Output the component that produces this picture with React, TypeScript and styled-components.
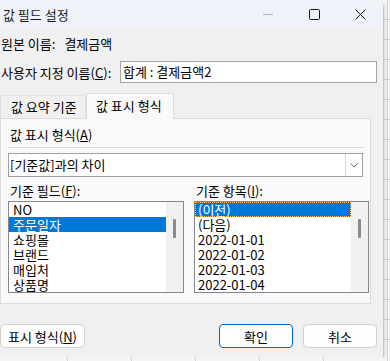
import React from 'react';
import styled, { createGlobalStyle } from 'styled-components';

const GlobalStyle = createGlobalStyle`
  html, body {
    margin: 0;
    padding: 0;
  }
  body {
    background-color: #f4f4f4;
    background-image:
      repeating-linear-gradient(to right, transparent 0 63px, #d2d2d2 63px 64px),
      repeating-linear-gradient(to bottom, transparent 0 19px, #d2d2d2 19px 20px);
    background-position: 4px 0, 0 0;
    font-family: "Noto Sans CJK KR", "Noto Sans", sans-serif;
    font-size: 13px;
    color: #000;
  }
`;

const Dialog = styled.div`
  width: 383px;
  height: 357px;
  box-sizing: border-box;
  background: #f0f0f0;
  border-radius: 0 7px 0 0;
  box-shadow: 1px 1px 0 #c8c8c8, 2px 2px 3px rgba(0, 0, 0, 0.12);
  display: flex;
  flex-direction: column;
  overflow: hidden;
`;

const TitleBar = styled.div`
  height: 28px;
  flex-shrink: 0;
  background: #eff3f9;
  display: flex;
  align-items: center;
  padding-left: 3px;
`;

const Title = styled.span`
  line-height: 15px;
  color: #1a1a1a;
`;

const Controls = styled.div`
  margin-left: auto;
  display: flex;
  height: 100%;
`;

const CaptionButton = styled.div`
  width: 46px;
  height: 100%;
  display: flex;
  align-items: center;
  justify-content: center;
`;

const Body = styled.div`
  flex: 1;
  display: flex;
  flex-direction: column;
  padding: 0 6px 0 1px;
`;

const InfoRow = styled.div`
  margin-top: 8px;
  line-height: 15px;
  display: flex;
  gap: 9px;
`;

const NameRow = styled.div`
  margin-top: 10px;
  display: flex;
  align-items: center;
`;

const NameLabel = styled.span`
  width: 119px;
  flex-shrink: 0;
  line-height: 15px;
  white-space: nowrap;
`;

const NameInput = styled.div`
  flex: 1;
  height: 22px;
  box-sizing: border-box;
  border: 1px solid #a6a6a6;
  background: #fff;
  padding-left: 2px;
  line-height: 20px;
`;

const U = styled.span`
  text-decoration: underline;
  text-underline-offset: 1px;
`;

const TabStrip = styled.div`
  margin: 10px 0 0 -1px;
  height: 25px;
  display: flex;
  align-items: flex-end;
  position: relative;
  z-index: 1;
`;

const Tab = styled.div<{ $active?: boolean }>`
  box-sizing: border-box;
  height: ${({ $active }) => ($active ? '26px' : '23px')};
  width: ${({ $active }) => ($active ? '88px' : '86px')};
  margin-bottom: ${({ $active }) => ($active ? '-1px' : '0')};
  background: ${({ $active }) => ($active ? '#f9f9f9' : '#f0f0f0')};
  border: 1px solid ${({ $active }) => ($active ? '#dcdcdc' : '#e2e2e2')};
  border-bottom: none;
  padding-left: ${({ $active }) => ($active ? '9px' : '10px')};
  line-height: ${({ $active }) => ($active ? '24px' : '21px')};
  white-space: nowrap;
`;

const Panel = styled.div`
  margin: 0 6px 0 -1px;
  height: 186px;
  box-sizing: border-box;
  background: #f9f9f9;
  border: 1px solid #dcdcdc;
  padding: 8px 7px 0;
  display: flex;
  flex-direction: column;
`;

const SectionLabel = styled.div`
  line-height: 15px;
  padding-left: 2px;
`;

const Separator = styled.div`
  margin-top: 5px;
  height: 1px;
  background: #d9d9d9;
`;

const Select = styled.div`
  margin-top: 5px;
  height: 24px;
  box-sizing: border-box;
  border: 1px solid #a0a0a0;
  background: #fff;
  display: flex;
`;

const SelectValue = styled.div`
  flex: 1;
  padding-left: 1px;
  line-height: 22px;
`;

const SelectArrow = styled.div`
  width: 16px;
  border-left: 1px solid #d4d4d4;
  display: flex;
  align-items: center;
  justify-content: center;
`;

const Columns = styled.div`
  margin-top: 6px;
  display: grid;
  grid-template-columns: 176px 175px;
  column-gap: 10px;
`;

const ColumnLabel = styled.div`
  line-height: 15px;
  padding-left: 2px;
  margin-bottom: 3px;
`;

const ListBox = styled.div`
  height: 92px;
  box-sizing: border-box;
  border: 1px solid #828790;
  background: #fff;
  display: flex;
`;

const ListRows = styled.div`
  flex: 1;
  overflow: hidden;
`;

const ListRow = styled.div<{ $selected?: boolean; $focus?: boolean; $indent: number }>`
  height: 15px;
  line-height: 15px;
  box-sizing: border-box;
  padding-left: ${({ $indent }) => $indent}px;
  white-space: nowrap;
  background: ${({ $selected }) => ($selected ? '#0078d7' : 'transparent')};
  color: ${({ $selected }) => ($selected ? '#fff' : '#000')};
  outline: ${({ $focus }) => ($focus ? '1px dotted #f5c26b' : 'none')};
  outline-offset: -1px;
`;

const ScrollTrack = styled.div`
  width: 17px;
  background: #f0f0f0;
  display: flex;
  justify-content: center;
  padding-top: 17px;
  box-sizing: border-box;
`;

const ScrollThumb = styled.div`
  width: 3px;
  height: 19px;
  border-radius: 1px;
  background: #8a8a8a;
`;

const ButtonRow = styled.div`
  margin-top: 20px;
  margin-left: -1px;
  display: flex;
  gap: 10px;
`;

const Button = styled.div<{ $primary?: boolean; $wide?: boolean }>`
  width: ${({ $wide }) => ($wide ? '85px' : '74px')};
  height: 24px;
  box-sizing: border-box;
  border: 1px solid ${({ $primary }) => ($primary ? '#0067c0' : '#d0d0d0')};
  border-radius: 4px;
  background: #fdfdfd;
  display: flex;
  align-items: center;
  justify-content: center;
  line-height: 15px;
  white-space: nowrap;
`;

const Spacer = styled.div`
  flex: 1;
`;

const fields = ['NO', '주문일자', '쇼핑몰', '브랜드', '매입처', '상품명'];
const items = ['(이전)', '(다음)', '2022-01-01', '2022-01-02', '2022-01-03', '2022-01-04'];

export default function App() {
  return (
    <>
      <GlobalStyle />
      <Dialog>
        <TitleBar>
          <Title>값 필드 설정</Title>
          <Controls>
            <CaptionButton>
              <svg width="10" height="10" viewBox="0 0 10 10">
                <path d="M0 5.5h10" stroke="#b5b5b5" strokeWidth="1" />
              </svg>
            </CaptionButton>
            <CaptionButton>
              <svg width="11" height="11" viewBox="0 0 11 11">
                <rect x="0.5" y="0.5" width="10" height="10" rx="1" fill="none" stroke="#1a1a1a" strokeWidth="1" />
              </svg>
            </CaptionButton>
            <CaptionButton>
              <svg width="11" height="11" viewBox="0 0 11 11">
                <path d="M0.5 0.5l10 10M10.5 0.5l-10 10" stroke="#1a1a1a" strokeWidth="1" />
              </svg>
            </CaptionButton>
          </Controls>
        </TitleBar>
        <Body>
          <InfoRow>
            <span>원본 이름:</span>
            <span>결제금액</span>
          </InfoRow>
          <NameRow>
            <NameLabel>
              사용자 지정 이름(<U>C</U>):
            </NameLabel>
            <NameInput>합계 : 결제금액2</NameInput>
          </NameRow>
          <TabStrip>
            <Tab>값 요약 기준</Tab>
            <Tab $active>값 표시 형식</Tab>
          </TabStrip>
          <Panel>
            <SectionLabel>
              값 표시 형식(<U>A</U>)
            </SectionLabel>
            <Separator />
            <Select>
              <SelectValue>[기준값]과의 차이</SelectValue>
              <SelectArrow>
                <svg width="8" height="5" viewBox="0 0 8 5">
                  <path d="M0.5 0.5l3.5 3.5 3.5-3.5" fill="none" stroke="#6b6b6b" strokeWidth="1" />
                </svg>
              </SelectArrow>
            </Select>
            <Columns>
              <div>
                <ColumnLabel>
                  기준 필드(<U>F</U>):
                </ColumnLabel>
                <ListBox>
                  <ListRows>
                    {fields.map((f) => (
                      <ListRow key={f} $indent={4} $selected={f === '주문일자'}>
                        {f}
                      </ListRow>
                    ))}
                  </ListRows>
                  <ScrollTrack>
                    <ScrollThumb />
                  </ScrollTrack>
                </ListBox>
              </div>
              <div>
                <ColumnLabel>
                  기준 항목(<U>I</U>):
                </ColumnLabel>
                <ListBox>
                  <ListRows>
                    {items.map((it, i) => (
                      <ListRow key={it} $indent={3} $selected={i === 0} $focus={i === 0}>
                        {it}
                      </ListRow>
                    ))}
                  </ListRows>
                  <ScrollTrack>
                    <ScrollThumb />
                  </ScrollTrack>
                </ListBox>
              </div>
            </Columns>
          </Panel>
          <ButtonRow>
            <Button $wide>
              표시 형식(<U>N</U>)
            </Button>
            <Spacer />
            <Button $primary>확인</Button>
            <Button>취소</Button>
          </ButtonRow>
        </Body>
      </Dialog>
    </>
  );
}
